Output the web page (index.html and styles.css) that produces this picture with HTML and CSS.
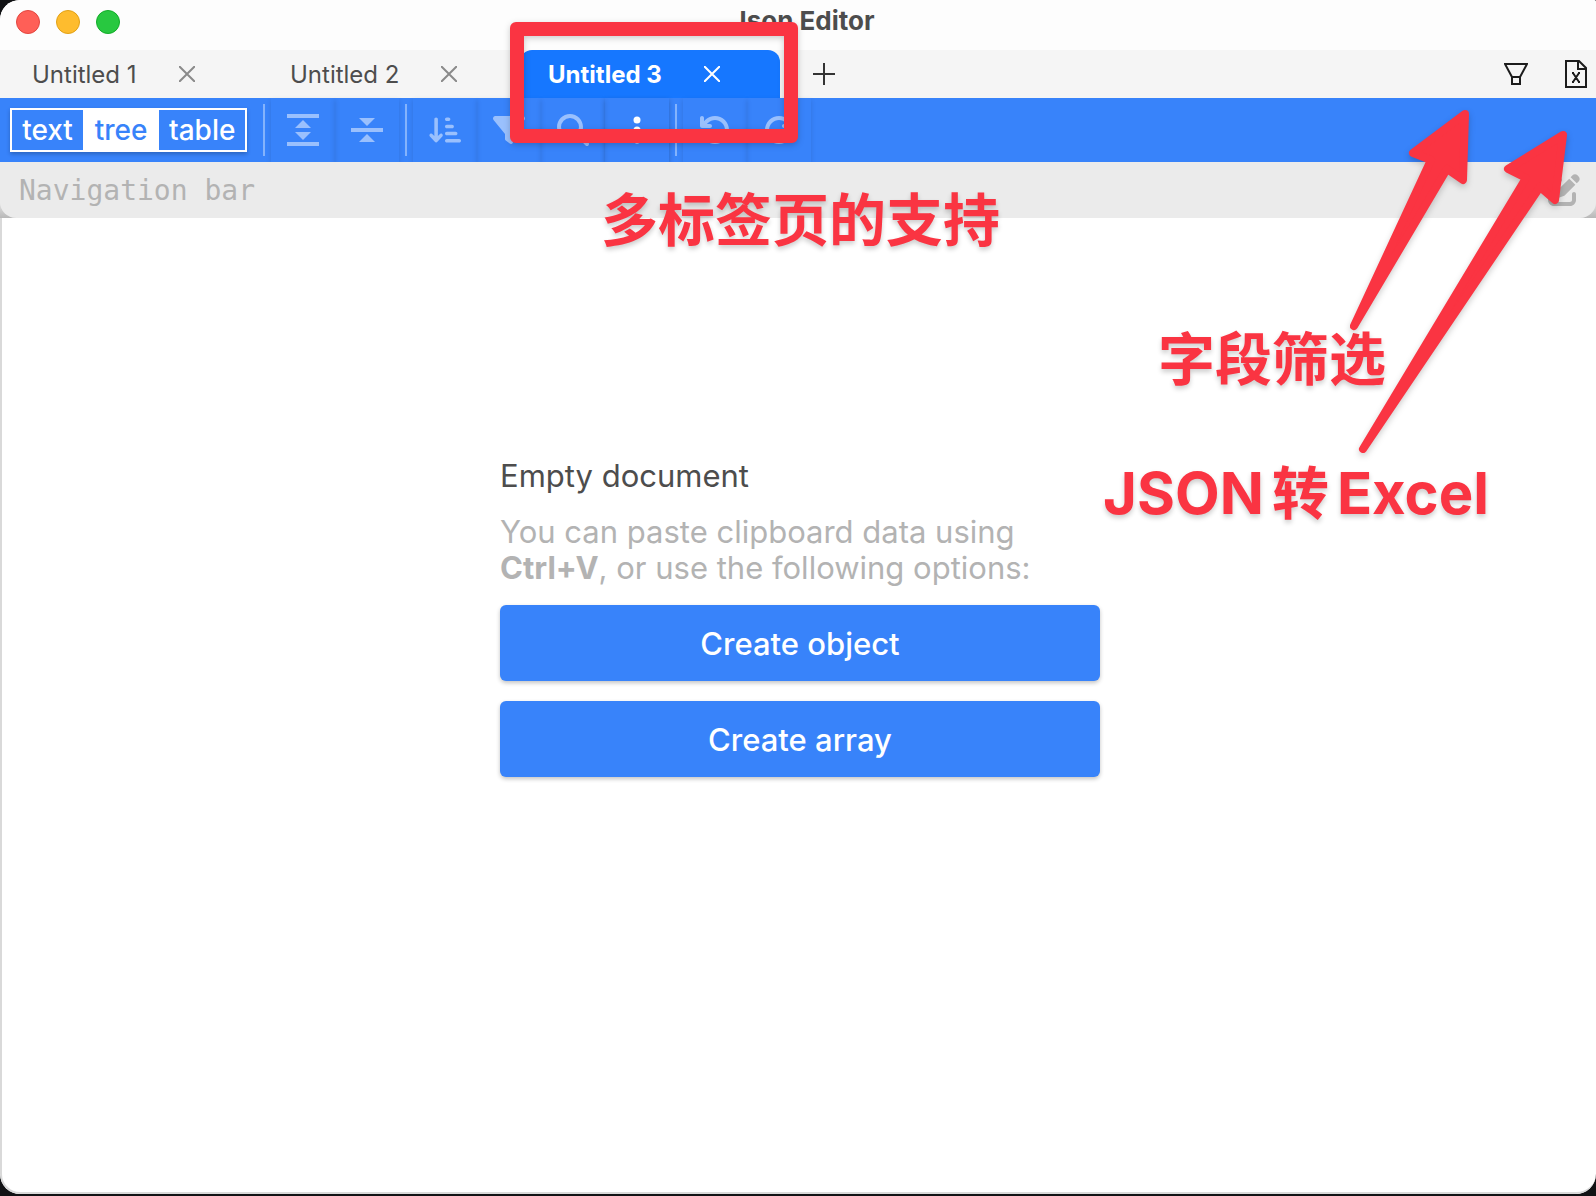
FILE: index.html
```html
<!DOCTYPE html>
<html lang="en">
<head>
<meta charset="utf-8">
<title>Json Editor</title>
<link rel="stylesheet" href="styles.css">
</head>
<body>
<div class="window">
  <header class="titlebar">
    <div class="lights"><span class="light light-close"></span><span class="light light-min"></span><span class="light light-max"></span></div>
    <h1 class="title">Json Editor</h1>
  </header>

  <nav class="tabs">
    <div class="tab">
      <button class="tab-label">Untitled 1</button>
      <button class="icon-button" aria-label="Close Untitled 1"><svg width="16" height="16" viewBox="0 0 16 16"><path class="line" d="M0 0L16 16M16 0L0 16"/></svg></button>
    </div>
    <div class="tab">
      <button class="tab-label">Untitled 2</button>
      <button class="icon-button" aria-label="Close Untitled 2"><svg width="16" height="16" viewBox="0 0 16 16"><path class="line" d="M0 0L16 16M16 0L0 16"/></svg></button>
    </div>
    <div class="tab tab-active">
      <button class="tab-label">Untitled 3</button>
      <button class="icon-button" aria-label="Close Untitled 3"><svg width="16" height="16" viewBox="0 0 16 16"><path class="line" d="M0 0L16 16M16 0L0 16"/></svg></button>
    </div>
    <button class="icon-button add" aria-label="New tab"><svg width="22" height="22" viewBox="0 0 22 22"><path class="line" d="M11 0V22M0 11H22"/></svg></button>
    <div class="tab-tools">
      <button class="icon-button" aria-label="Filter fields"><svg width="24" height="24" viewBox="0 0 24 24"><path class="line" d="M1 2H23L16 15V22H8V15ZM8 15H16"/></svg></button>
      <button class="icon-button" aria-label="Export to Excel"><svg width="22" height="28" viewBox="0 0 22 28"><path class="line" d="M1 1H14L21 8V27H1ZM13 1V9H21"/><path class="line" d="M8 13L14 22M14 13L8 22M7 13H9M13 13H15M7 22H9M13 22H15"/></svg></button>
    </div>
  </nav>

  <div class="toolbar">
    <div class="modes">
      <button class="mode">text</button>
      <button class="mode mode-on">tree</button>
      <button class="mode">table</button>
    </div>
    <span class="separator"></span>
    <button class="tool" disabled aria-label="Expand all"><svg width="32" height="32" viewBox="0 0 32 32"><path d="M0 0H32V4H0ZM0 28H32V32H0ZM16 6L24 14H8ZM16 26L24 18H8Z"/></svg></button>
    <button class="tool" disabled aria-label="Collapse all"><svg width="32" height="32" viewBox="0 0 32 32"><path d="M0 14H32V18H0ZM8 4H24L16 12ZM8 28H24L16 20Z"/></svg></button>
    <span class="separator"></span>
    <button class="tool" disabled aria-label="Sort"><svg width="32" height="32" viewBox="0 0 576 512"><path d="M151.6 469.6C145.500 476.200 137 480 128 480s-17.500-3.800-23.600-10.400l-88-96c-11.900-13-11.100-33.300 2-45.200s33.300-11.100 45.200 2L96 365.700V64c0-17.700 14.300-32 32-32s32 14.300 32 32V365.700l32.400-35.400c11.900-13 32.200-13.900 45.200-2s13.900 32.200 2 45.200l-88 96zM320 32h32c17.700 0 32 14.300 32 32s-14.300 32-32 32H320c-17.700 0-32-14.300-32-32s14.300-32 32-32zm0 128h96c17.700 0 32 14.300 32 32s-14.300 32-32 32H320c-17.700 0-32-14.300-32-32s14.300-32 32-32zm0 128H480c17.700 0 32 14.300 32 32s-14.300 32-32 32H320c-17.700 0-32-14.300-32-32s14.300-32 32-32zm0 128H544c17.700 0 32 14.300 32 32s-14.300 32-32 32H320c-17.700 0-32-14.300-32-32s14.300-32 32-32z"/></svg></button>
    <button class="tool" disabled aria-label="Transform"><svg width="32" height="32" viewBox="0 0 512 512"><path d="M3.900 54.900C10.500 40.900 24.500 32 40 32H472c15.500 0 29.500 8.900 36.100 22.900s4.600 30.500-5.200 42.500L320 320.900V448c0 12.100-6.800 23.200-17.700 28.600s-23.800 4.300-33.500-3l-64-48c-8.100-6-12.800-15.500-12.800-25.600V320.900L9 97.300C-.7 85.400-2.800 68.800 3.900 54.900z"/></svg></button>
    <button class="tool" disabled aria-label="Search"><svg width="32" height="32" viewBox="0 0 512 512"><path d="M416 208c0 45.900-14.900 88.300-40 122.700L502.600 457.400c12.500 12.500 12.500 32.800 0 45.300s-32.800 12.500-45.300 0L330.700 376c-34.400 25.200-76.800 40-122.700 40C93.100 416 0 322.900 0 208S93.100 0 208 0S416 93.100 416 208zM208 352a144 144 0 1 0 0-288 144 144 0 1 0 0 288z"/></svg></button>
    <button class="tool" aria-label="More"><svg width="32" height="32" viewBox="0 0 512 512"><circle cx="256" cy="96" r="56"/><circle cx="256" cy="256" r="56"/><circle cx="256" cy="416" r="56"/></svg></button>
    <span class="separator"></span>
    <button class="tool" disabled aria-label="Undo"><svg width="32" height="32" viewBox="0 0 512 512"><path id="turn" d="M125.700 160H176c17.700 0 32 14.300 32 32s-14.300 32-32 32H48c-17.700 0-32-14.300-32-32V64c0-17.700 14.300-32 32-32s32 14.300 32 32v51.200L97.600 97.600c87.500-87.500 229.300-87.500 316.800 0s87.500 229.300 0 316.800s-229.300 87.500-316.800 0c-12.500-12.500-12.500-32.800 0-45.300s32.800-12.500 45.300 0c62.500 62.500 163.800 62.500 226.300 0s62.500-163.800 0-226.300s-163.800-62.500-226.300 0L125.700 160z"/></svg></button>
    <button class="tool" disabled aria-label="Redo"><svg width="32" height="32" viewBox="0 0 512 512"><use href="#turn" transform="translate(512 0) scale(-1 1)"/></svg></button>
  </div>

  <div class="path-frame">
    <div class="path-bar">
      <span>Navigation bar</span>
      <button class="icon-button" aria-label="Edit path"><svg width="32" height="32" viewBox="0 0 512 512"><path d="M471.600 21.700c-21.900-21.900-57.300-21.900-79.200 0L362.300 51.700l97.900 97.900 30.100-30.100c21.900-21.900 21.900-57.300 0-79.200L471.600 21.700zm-299.200 220c-6.100 6.100-10.800 13.600-13.500 21.900l-29.600 88.800c-2.900 8.600-.6 18.100 5.800 24.600s15.900 8.700 24.600 5.800l88.800-29.600c8.200-2.700 15.700-7.400 21.900-13.500L437.700 172.300 339.700 74.300 172.400 241.700zM96 64C43 64 0 107 0 160V416c0 53 43 96 96 96H352c53 0 96-43 96-96V320c0-17.700-14.300-32-32-32s-32 14.300-32 32v96c0 17.700-14.300 32-32 32H96c-17.700 0-32-14.300-32-32V160c0-17.700 14.300-32 32-32h96c17.700 0 32-14.300 32-32s-14.300-32-32-32H96z"/></svg></button>
    </div>
  </div>

  <main class="content">
    <section class="welcome">
      <h2 class="welcome-title">Empty document</h2>
      <p class="welcome-text">You can paste clipboard data using <b>Ctrl+V</b>, or use the following options:</p>
      <button class="create">Create object</button>
      <button class="create">Create array</button>
    </section>
  </main>

  <div class="mark frame"></div>
  <div class="mark note note-tabs">多标签页的支持</div>
  <div class="mark note note-filter">字段筛选</div>
  <div class="mark note note-excel">JSON<span class="cjk">转</span>Excel</div>
  <svg class="mark arrows" width="260" height="360" viewBox="1336 100 260 360">
    <path d="M1465 114L1413 153L1431 160L1354 326L1447 169L1463 180Z"/>
    <path d="M1563 135L1508 169L1526 178L1363 449L1540 187L1555 200Z"/>
  </svg>
</div>
</body>
</html>
```
FILE: styles.css
```css
* { box-sizing: border-box; }
body {
  margin: 0;
  background: #111214;
  color: #4d4d4d;
  font-family: Inter, "Noto Sans CJK SC", sans-serif;
}
button {
  margin: 0;
  padding: 0;
  border: 0;
  background: none;
  color: inherit;
  font: inherit;
}
svg { display: block; fill: currentColor; }
.line { fill: none; stroke: currentColor; stroke-width: 2; }

.window {
  position: relative;
  display: flex;
  flex-direction: column;
  height: calc(100vh - 2px);
  overflow: hidden;
  border-radius: 20px 2px 20px 20px;
  background: #fff;
}

.titlebar {
  display: flex;
  align-items: flex-start;
  height: 50px;
  padding: 10px 6px 10px 16px;
  background: #fdfdfd;
}
.titlebar::after { content: ""; flex: 1; }
.lights { display: flex; flex: 1; gap: 16px; }
.light { width: 24px; height: 24px; border: 1px solid; border-radius: 50%; }
.light-close { background: #ff5f57; border-color: #e2463f; }
.light-min { background: #febc2e; border-color: #e1a116; }
.light-max { background: #28c840; border-color: #12ac28; }
.title { margin: 0; font-size: 26px; font-weight: 700; line-height: 22px; }

.tabs {
  display: flex;
  height: 48px;
  padding-left: 4px;
  background: #f5f5f5;
  font-size: 24px;
}
.tab {
  display: flex;
  align-items: center;
  gap: 42px;
  width: 258px;
  padding-left: 28px;
}
.tab .icon-button { color: #8a8a8a; }
.tab-active {
  width: 260px;
  border-radius: 12px 12px 0 0;
  background: #1677ff;
  color: #fff;
  font-weight: 700;
}
.tab-active .icon-button { color: #fff; }
.icon-button { display: flex; align-items: center; }
.add { margin-left: 33px; color: #333; }
.tab-tools { display: flex; gap: 37px; margin-left: auto; padding-right: 9px; color: #1c1c1c; }

.toolbar {
  display: flex;
  align-items: center;
  height: 64px;
  padding-left: 10px;
  background: #3883fa;
  color: #fff;
}
.modes {
  display: flex;
  height: 44px;
  margin-right: 10px;
  border: 2px solid #fff;
  box-shadow: 0 2px 4px rgba(0, 0, 0, .24);
  font-size: 28px;
  font-weight: 500;
}
.mode { min-width: 71px; padding: 0 10px; }
.mode-on { min-width: 76px; background: #fff; color: #3883fa; }
.separator { width: 2px; height: 52px; margin: 0 6px; background: #84b3fc; }
.tool {
  display: flex;
  align-items: center;
  justify-content: center;
  width: 64px;
  height: 64px;
  color: #fff;
  box-shadow: 0 2px 5px rgba(0, 0, 0, .24);
}
.tool:disabled { color: #9ac0fd; box-shadow: 0 2px 5px rgba(0, 0, 0, .12); }

.path-frame { background: linear-gradient(#e6e6e6 70%, #b8b8b8); }
.path-bar {
  display: flex;
  align-items: center;
  justify-content: space-between;
  height: 56px;
  padding: 0 16px 0 19px;
  border-radius: 0 0 16px 16px;
  background: #ebebeb;
  color: #b3b3b3;
  font: 28px "DejaVu Sans Mono", monospace;
}

.content {
  flex: 1;
  padding: 240px 0 20px 2px;
  border: solid #d9d9d9;
  border-width: 0 0 2px 2px;
  border-radius: 0 0 20px 20px;
}
.welcome {
  display: flex;
  flex-direction: column;
  width: 600px;
  max-width: 100%;
  margin: 0 auto;
  font-size: 31px;
  line-height: 36px;
}
.welcome-title { margin: 0 0 20px; font-size: 31px; font-weight: 400; }
.welcome-text { margin: 0 0 19px; padding-right: 60px; color: #b3b3b3; }
.create {
  height: 76px;
  padding-top: 2px;
  margin-bottom: 20px;
  border-radius: 6px;
  background: #3883fa;
  color: #fff;
  font-weight: 500;
  box-shadow: 0 2px 4px rgba(0, 0, 0, .24);
}

/* Callouts over the window */
.mark { position: absolute; color: #fa3442; pointer-events: none; }
.frame {
  left: 510px;
  top: 22px;
  width: 288px;
  height: 121px;
  border: 14px solid;
  border-radius: 6px;
  filter: drop-shadow(0 2px 3px rgba(0, 0, 0, .2));
}
.note {
  font-size: 57px;
  font-weight: 700;
  line-height: 64px;
  white-space: nowrap;
  text-shadow: 0 3px 5px rgba(0, 0, 0, .2);
}
.note-tabs { left: 601px; top: 189px; }
.note-filter { right: 210px; top: 328px; }
.note-excel { right: 107px; top: 461px; font-size: 58px; }
.cjk { margin: 0 8px; font-size: 57px; }
.arrows {
  right: 0;
  top: 100px;
  stroke: currentColor;
  stroke-width: 8;
  stroke-linejoin: round;
  filter: drop-shadow(0 3px 3px rgba(0, 0, 0, .2));
}
```
